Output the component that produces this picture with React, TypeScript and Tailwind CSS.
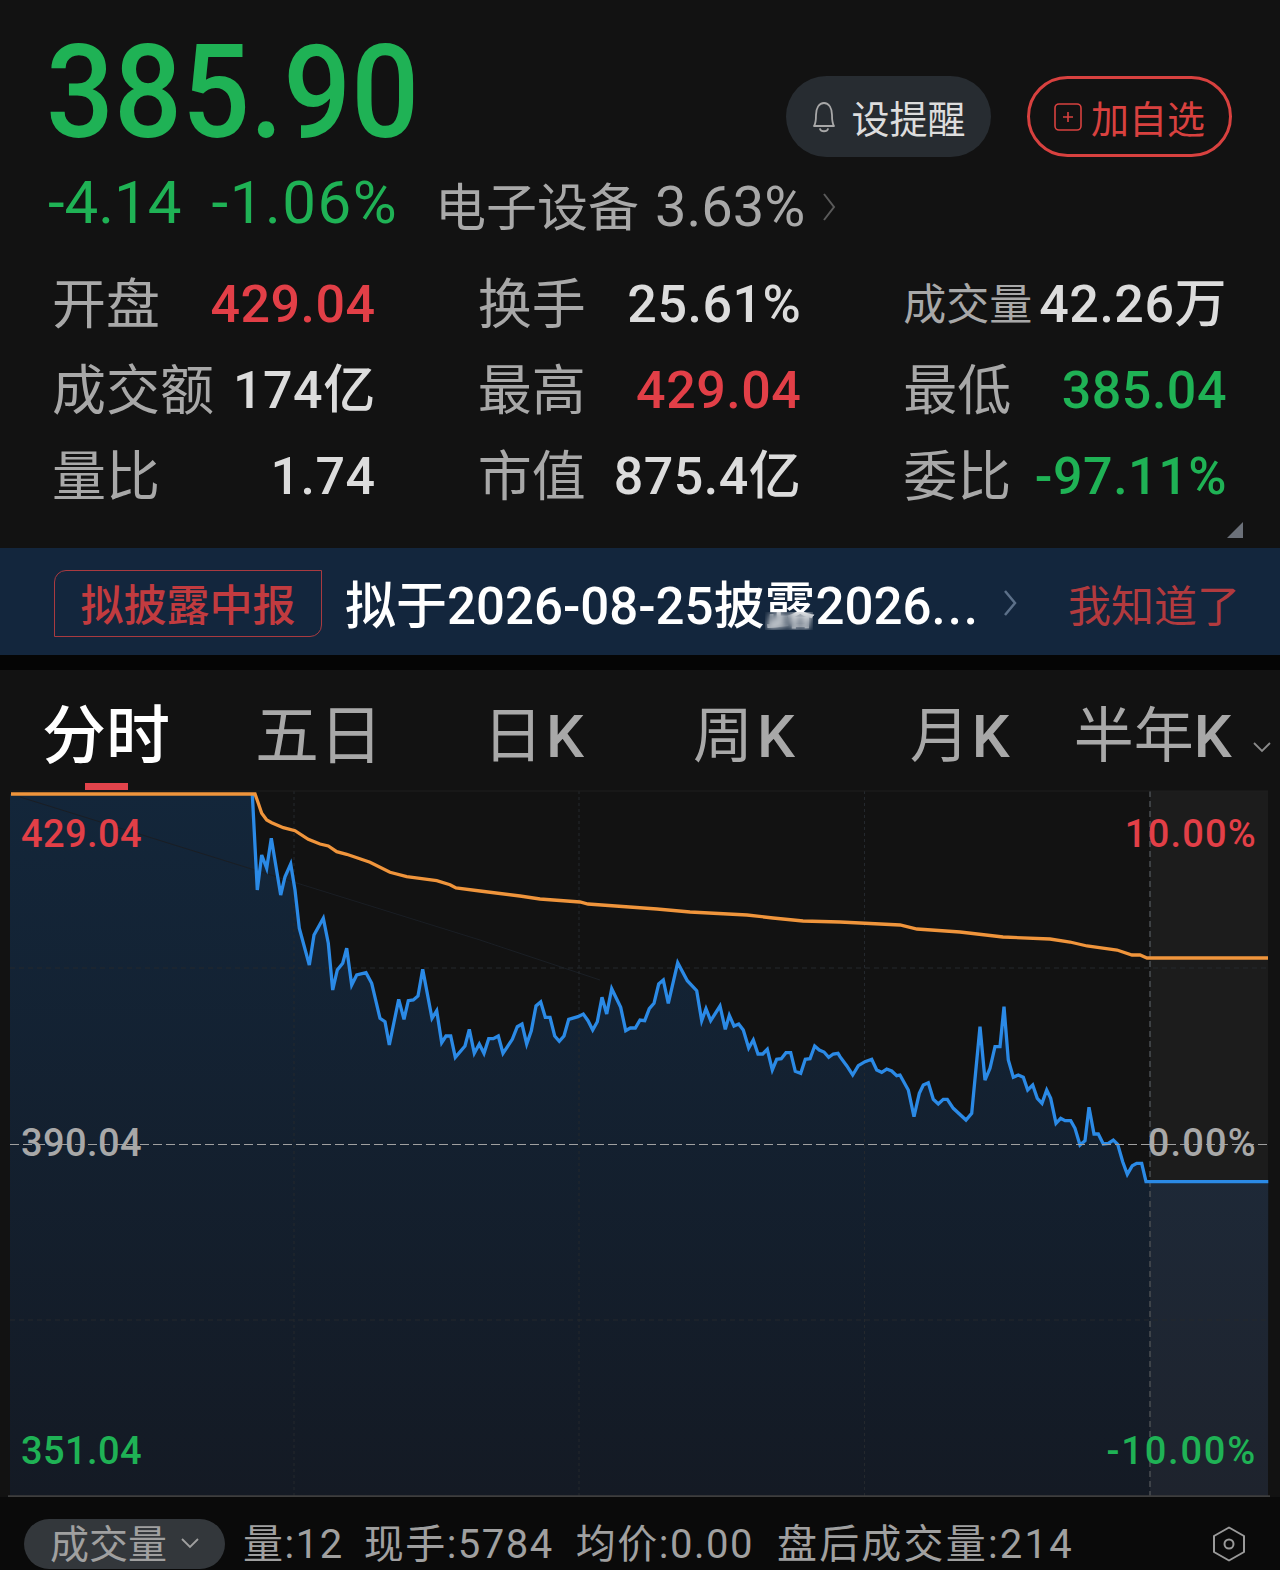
import React from 'react';

const FONT = 'font-[Roboto,"Noto_Sans_CJK_SC",sans-serif]';

// line traces, measured off 3x crops of the chart
const toPage = (pts: number[][], ox: number, oy: number) => pts.map(([x, y]) => [ox + x / 3, oy + y / 3]);

const blueA = toPage(
  [[757,42],[772,330],[785,225],[800,265],[814,175],[842,345],[855,290],[872,252],[885,330],[898,445],[928,555],[942,465],[970,415],[985,490],[998,630],[1012,570],[1028,550],[1040,505],[1055,615],[1070,585],[1098,578],[1115,610],[1140,715],[1155,725],[1168,795],[1196,658],[1212,718],[1225,662],[1240,660],[1254,648],[1268,568],[1296,715],[1310,692]],
  0, 780,
);
const blueB = toPage(
  [[5,428],[18,408],[32,408],[46,472],[75,438],[88,388],[103,460],[118,432],[132,460],[146,416],[160,416],[175,408],[189,460],[217,418],[232,380],[246,372],[260,432],[274,392],[288,318],[302,306],[316,352],[330,352],[344,408],[358,424],[372,408],[386,358],[414,350],[430,342],[444,362],[458,390],[472,365],[486,292],[500,342],[515,266],[542,322],[557,392],[571,384],[586,384],[600,360],[614,362],[628,326],[642,310],[656,252],[670,240],[685,310],[713,188],[742,242],[770,272],[785,362],[798,326],[812,362],[840,318],[856,388],[868,346],[882,378],[896,372],[910,390],[926,444],[940,420],[954,462],[968,462],[982,448],[997,510],[1010,478],[1024,476],[1038,458],[1052,458],[1066,514],[1082,520],[1096,478],[1110,476],[1124,438],[1138,450],[1152,456],[1166,472],[1180,462],[1194,460]],
  440, 900,
);
const blueC = toPage(
  [[0,470],[20,497],[38,525],[55,497],[75,485],[95,478],[110,510],[125,517],[140,507],[155,513],[170,527],[180,525],[205,570],[222,650],[238,580],[250,555],[265,548],[280,598],[295,612],[310,598],[322,598],[340,625],[378,660],[395,640],[420,380],[435,540],[450,505],[465,440],[480,440],[492,320],[505,480],[520,532],[535,525],[550,532],[563,570],[578,555],[592,595],[606,610],[620,570],[632,595],[648,670],[662,655],[675,662],[692,662],[705,685],[720,735],[735,722],[747,622],[762,702],[775,702],[790,732],[805,730],[820,720],[833,733],[848,785],[862,823],[877,797],[890,790],[905,790],[918,845],[1285,845]],
  840, 900,
);
const blue = [...blueA, ...blueB, ...blueC];

const orange = [
  [11,794],[255,794],
  ...toPage([[775,70],[785,100],[800,120],[815,128],[850,143],[885,152],[925,178],[960,192],[985,198],[1010,215],[1040,223],[1110,247],[1170,277],[1220,290],[1310,302],[1350,314],[1368,324]], 0, 780),
  [480,891],[520,896],[540,899],[580,902],[588,904],[657,909],[690,912],[747,915],[773,918],[803,921],[840,922],[900,925],[917,929],[960,932],[1003,937],[1050,939],[1070,942],[1087,946],[1117,950],[1132,955],[1140,955],[1147,958],[1268,958],
];

const line = (pts: number[][]) => pts.map(([x, y]) => `${x.toFixed(1)},${y.toFixed(1)}`).join(' ');

const Stat: React.FC<{ label: string; value: string; valueClass?: string; labelClass?: string }> = ({
  label,
  value,
  valueClass = 'text-[#dcdcdc]',
  labelClass = 'text-[54px] text-[#a8a8a8]',
}) => (
  <div className="flex h-[86px] items-center justify-between">
    <span className={labelClass}>{label}</span>
    <span className={`text-[52px] font-medium tracking-[0.5px] ${valueClass}`}>{value}</span>
  </div>
);

const Header: React.FC = () => (
  <section className="h-[548px] bg-[#121212]">
    <div className="flex h-[176px] items-start justify-between pl-[46px] pr-[48px]">
      <span className="mt-[18px] origin-left scale-x-[0.92] text-[130px] leading-[150px] font-medium text-[#1fb255]">385.90</span>
      <div className="mt-[76px] flex gap-[36px]">
        <button className="flex h-[81px] w-[205px] items-center justify-center gap-[14px] rounded-full bg-[#272c31] pt-[7px] text-[38px] text-[#dddddd]">
          <svg className="mb-[7px]" width="26" height="32" viewBox="0 0 26 32" fill="none" stroke="#a8a8a8" strokeWidth="1.8" strokeLinejoin="round">
            <path d="M3 25 C5 22 5 20 5 14 C5 7 8 2 13 2 C18 2 21 7 21 14 C21 20 21 22 23 25 Z" />
            <path d="M9 28 C10 31 16 31 17 28" strokeLinecap="round" />
          </svg>
          设提醒
        </button>
        <button className="flex h-[81px] w-[205px] items-center justify-center gap-[9px] rounded-full border-[3px] border-[#d8413f] pt-[7px] text-[38px] text-[#d8413f]">
          <svg className="mb-[7px]" width="28" height="28" viewBox="0 0 28 28" fill="none" stroke="#d8413f" strokeWidth="1.6">
            <rect x="1" y="1" width="26" height="26" rx="4" />
            <path d="M9 14 H19 M14 9 V19" />
          </svg>
          加自选
        </button>
      </div>
    </div>

    <div className="flex h-[62px] items-center pl-[48px]">
      <span className="pb-[8px] text-[60px] text-[#1fb255]">-4.14</span>
      <span className="ml-[30px] pb-[8px] text-[60px] tracking-[1.5px] text-[#1fb255]">-1.06%</span>
      <span className="ml-[37px] pt-[4px] text-[51px] text-[#a8a8a8]">电子设备</span>
      <span className="ml-[16px] text-[56px] text-[#a8a8a8]">3.63%</span>
      <svg className="ml-[17px]" width="14" height="30" viewBox="0 0 14 30" fill="none" stroke="#5a5a5a" strokeWidth="2">
        <path d="M2 2 L12 15 L2 28" />
      </svg>
    </div>

    <div className="relative mt-[24px] grid grid-cols-3 gap-x-[102px] pl-[52px] pr-[53px]">
      <Stat label="开盘" value="429.04" valueClass="text-[#e23f47]" />
      <Stat label="换手" value="25.61%" />
      <Stat label="成交量" value="42.26万" labelClass="text-[43px] text-[#a8a8a8]" />
      <Stat label="成交额" value="174亿" />
      <Stat label="最高" value="429.04" valueClass="text-[#e23f47]" />
      <Stat label="最低" value="385.04" valueClass="text-[#1fb255]" />
      <Stat label="量比" value="1.74" />
      <Stat label="市值" value="875.4亿" />
      <Stat label="委比" value="-97.11%" valueClass="text-[#1fb255]" />
      <svg className="absolute top-[260px] right-[37px]" width="16" height="16" viewBox="0 0 16 16" fill="#6b7079">
        <path d="M16 0 V16 H0 Z" />
      </svg>
    </div>
  </section>
);

const Notice: React.FC = () => (
  <section className="relative flex h-[107px] items-center bg-[#13263d] pt-[3px] pl-[54px]">
    <span className="flex h-[67px] w-[268px] items-center justify-center rounded-tl-[12px] rounded-br-[12px] border border-[#a93a40] pt-[7px] text-[43px] font-medium text-[#c23b3f]">
      拟披露中报
    </span>
    <span className="ml-[23px] w-[640px] pt-[8px] text-[51px] font-medium whitespace-nowrap text-white">
      拟于2026-08-25披露2026<span className="tracking-[2px]">...</span>
    </span>
    <svg className="ml-[18px]" width="14" height="28" viewBox="0 0 14 28" fill="none" stroke="#5c7089" strokeWidth="2.5">
      <path d="M2 2 L12 14 L2 26" />
    </svg>
    <span className="ml-[51px] pt-[8px] text-[43px] text-[#b23a3e]">我知道了</span>
    <div className="absolute top-[64px] left-[765px] h-[18px] w-[48px] backdrop-blur-[3px]" />
  </section>
);

const Tabs: React.FC = () => (
  <nav className="relative flex h-[120px] items-center bg-[#121212] pt-[13px] pl-[42px] text-[60px] text-[#a8a8a8]">
    <span className="text-[64px] font-medium text-white">分时</span>
    <span className="ml-[85px] text-[64px]">五日</span>
    <span className="ml-[100px]">
      日<span className="ml-[3px] font-medium">K</span>
    </span>
    <span className="ml-[109px]">
      周<span className="ml-[4px] font-medium">K</span>
    </span>
    <span className="ml-[115px]">
      月<span className="ml-[2px] font-medium">K</span>
    </span>
    <span className="ml-[64px]">
      半年<span className="font-medium">K</span>
    </span>
    <svg className="mt-[20px] ml-[20px]" width="20" height="12" viewBox="0 0 20 12" fill="none" stroke="#8a8a8a" strokeWidth="1.8">
      <path d="M2 2 L10 10 L18 2" />
    </svg>
    <div className="absolute bottom-0 left-[85px] h-[7px] w-[43px] bg-[#e2434b]" />
  </nav>
);

const ChartLabel: React.FC<{ className: string; children: React.ReactNode }> = ({ className, children }) => (
  <span className={`absolute text-[38px] leading-[40px] font-medium ${className}`}>{children}</span>
);

const Chart: React.FC = () => (
  <section className="relative h-[707px] bg-[#121212]">
    <svg className="block h-full w-full" viewBox="0 790 1280 707" fill="none">
      <defs>
        <linearGradient id="area" x1="0" y1="0" x2="0" y2="1">
          <stop offset="0" stopColor="#13263a" />
          <stop offset="1" stopColor="#141a24" />
        </linearGradient>
      </defs>
      <polygon points={`10,794 ${line(blue)} 1268,1496 10,1496`} fill="url(#area)" />
      <rect x="1150" y="791" width="118" height="705" fill="#ffffff" fillOpacity="0.045" />
      <path d="M20 797 L480 940 L600 980" stroke="#1a1e24" strokeWidth="1" />
      <path d="M294 791 V1496 M579 791 V1496 M864.5 791 V1496" stroke="#24282d" strokeWidth="1" strokeDasharray="3 3" />
      <path d="M1150 791 V1496" stroke="#4a4d52" strokeWidth="1.5" strokeDasharray="6 4" />
      <path d="M10 791 H1268" stroke="#1f1f1f" strokeWidth="1" />
      <path d="M10 968 H1268 M10 1320 H1268" stroke="#24282d" strokeWidth="1" strokeDasharray="5 4" />
      <polyline points={line(blue)} stroke="#2b8ae6" strokeWidth="3.3" strokeLinejoin="miter" />
      <polyline points={line(orange)} stroke="#f0953c" strokeWidth="3.3" />
      <path d="M10 1144.5 H1268" stroke="#a0a0a0" strokeWidth="1.2" strokeDasharray="9 4" />
      <path d="M8 1496.5 H1270" stroke="#3e3e3e" strokeWidth="2.5" />
    </svg>
    <ChartLabel className="top-[24px] left-[21px] tracking-[0.4px] text-[#e23f47]">429.04</ChartLabel>
    <ChartLabel className="top-[24px] right-[23px] tracking-[1.2px] text-[#e23f47]">10.00%</ChartLabel>
    <ChartLabel className="top-[333px] left-[21px] tracking-[0.4px] text-[#a8a8a8]">390.04</ChartLabel>
    <ChartLabel className="top-[333px] right-[23px] tracking-[1.2px] text-[#a8a8a8]">0.00%</ChartLabel>
    <ChartLabel className="top-[641px] left-[21px] tracking-[0.4px] text-[#1fb255]">351.04</ChartLabel>
    <ChartLabel className="top-[641px] right-[23px] tracking-[1.8px] text-[#1fb255]">-10.00%</ChartLabel>
  </section>
);

const Footer: React.FC = () => (
  <footer className="flex h-[73px] items-center bg-[#0a0a0a] pt-[20px] pl-[24px] text-[40px] tracking-[1.5px] text-[#a0a0a0]">
    <div className="flex h-[50px] w-[201px] items-center rounded-full bg-[#33373b] pl-[26px] text-[39px] tracking-normal">
      <span className="pt-[3px]">成交量</span>
      <svg className="ml-[14px]" width="18" height="11" viewBox="0 0 18 11" fill="none" stroke="#a0a0a0" strokeWidth="1.8">
        <path d="M1 1 L9 9 L17 1" />
      </svg>
    </div>
    <span className="ml-[18px] pt-[3px]">量:12</span>
    <span className="ml-[20px] pt-[3px]">现手:5784</span>
    <span className="ml-[22px] pt-[3px]">均价:0.00</span>
    <span className="ml-[23px] pt-[3px] tracking-[2.2px]">盘后成交量:214</span>
    <svg className="mr-[34px] ml-auto" width="34" height="36" viewBox="0 0 34 36" fill="none" stroke="#9a9a9a" strokeWidth="2">
      <path d="M17 1.5 L32 10 V26 L17 34.5 L2 26 V10 Z" strokeLinejoin="round" />
      <circle cx="17" cy="18" r="4.5" />
    </svg>
  </footer>
);

export default function App() {
  return (
    <div className={`h-[1570px] w-[1280px] overflow-hidden bg-[#121212] ${FONT}`}>
      <Header />
      <Notice />
      <div className="h-[15px] bg-[#050505]" />
      <Tabs />
      <Chart />
      <Footer />
    </div>
  );
}
